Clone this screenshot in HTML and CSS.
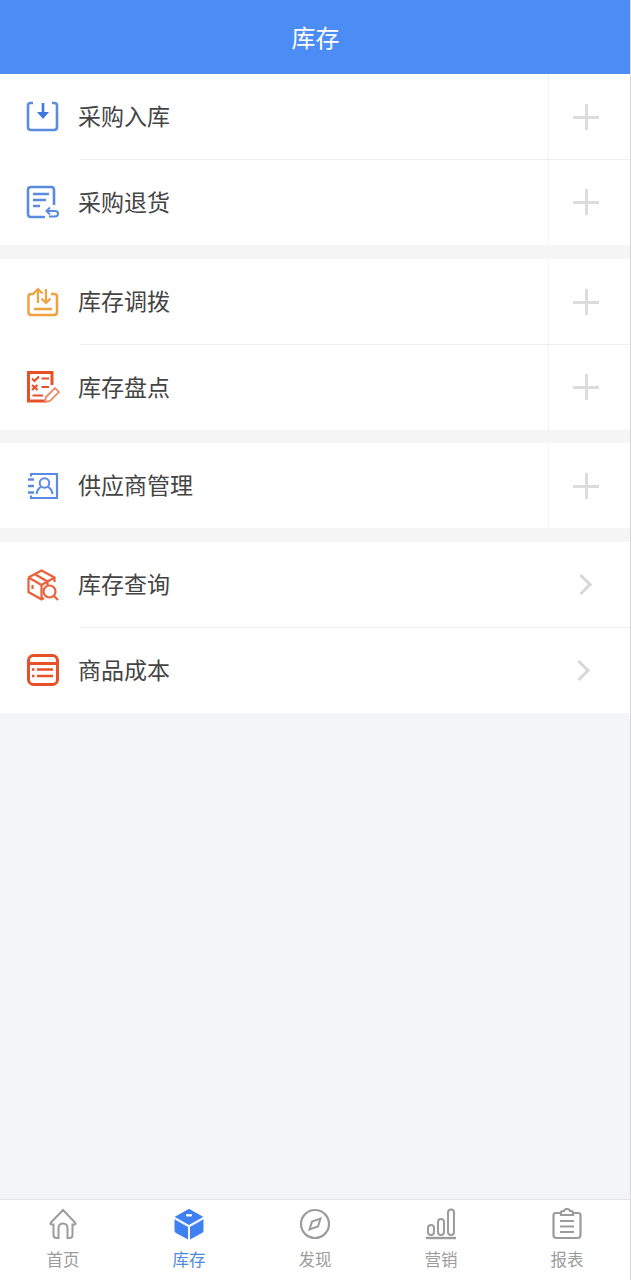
FILE: index.html
```html
<!DOCTYPE html>
<html lang="zh-CN">
<head>
    <meta charset="UTF-8">
    <meta name="viewport" content="width=device-width, initial-scale=1.0">
    <title>库存</title>
    <link rel="stylesheet" href="styles.css">
</head>
<body>
    <div class="page">
        <div class="header">库存</div>
        <div class="content">
            <div class="group">
                <div class="row">
                    <svg class="icon" viewBox="0 0 34 34" fill="none" stroke="#5b8be0" stroke-width="2.600"><path d="M7 3H4.500Q2 3 2 5.500V27Q2 30 5 30H28Q31 30 31 27V5.500Q31 3 28.500 3H26"/><path d="M17 3V15" stroke="#3f78e0"/><path d="M11 12H23L17 19Z" fill="#3f78e0" stroke="none"/></svg>
                    <span class="label">采购入库</span>
                    <div class="action"><span class="plus"></span></div>
                </div>
                <div class="row">
                    <svg class="icon" viewBox="0 0 34 34" fill="none" stroke="#5b8be0" stroke-width="2.600"><path d="M19 32H5Q2 32 2 29V5Q2 2 5 2H25Q28 2 28 5V20"/><path d="M7 9H23M7 15H20M7 21H14"/><path d="M24 22.500L20.500 26L24 29.500M21 26H29Q32 26 32 28.500Q32 31.500 29 31.500H23" stroke-width="2"/></svg>
                    <span class="label">采购退货</span>
                    <div class="action"><span class="plus"></span></div>
                </div>
            </div>
            <div class="group">
                <div class="row">
                    <svg class="icon" viewBox="0 0 34 34" fill="none" stroke="#f0a23e" stroke-width="2.500"><path d="M8 9H5Q2.500 9 2.500 11.500V27Q2.500 30 5.500 30H28Q31 30 31 27V11.500Q31 9 28.500 9H25"/><path d="M8 24H26"/><path d="M12 18V4M7.500 8.500L12 4L16.500 8.500M20 4V18M15.500 13.500L20 18L24.500 13.500" stroke-width="2.200"/></svg>
                    <span class="label">库存调拨</span>
                    <div class="action"><span class="plus"></span></div>
                </div>
                <div class="row">
                    <svg class="icon" viewBox="0 0 34 34" fill="none" stroke="#e8502a" stroke-width="3"><path d="M20 31H2.500V2.500H26V15"/><path d="M6 8.500L8.500 11L13 6.500M6 15L11.500 20M11.500 15L6 20M15.500 8.500H23M15.500 17H23M6.500 25.500H17" stroke-width="2.200"/><path d="M19 32L20 27L29 18L33 22L24 31Z" stroke="#ee8a6c" stroke-width="1.800"/></svg>
                    <span class="label">库存盘点</span>
                    <div class="action"><span class="plus"></span></div>
                </div>
            </div>
            <div class="group">
                <div class="row">
                    <svg class="icon" viewBox="0 0 34 34" fill="none" stroke="#5b8be0" stroke-width="2.200"><path d="M5 7.500V5H31V29H5V26.500"/><path d="M2 10.500H8M2 17H8M2 23.500H8" stroke-width="2.400"/><circle cx="18.500" cy="14" r="4.800" stroke-width="2"/><path d="M10.500 25Q11.500 19.500 15 18M26.500 25Q25.500 19.500 22 18" stroke-width="2"/></svg>
                    <span class="label">供应商管理</span>
                    <div class="action"><span class="plus"></span></div>
                </div>
            </div>
            <div class="group">
                <div class="row">
                    <svg class="icon" viewBox="0 0 34 34" fill="none" stroke="#e8613a" stroke-width="2.200"><path d="M2.500 9.500L15.500 2.500L28.500 9.500V14M2.500 9.500V24L15.500 31.500L18 30M2.500 9.500L15.500 17V31.500M15.500 17L28.500 9.500M8.500 6L21.500 13.500V17M6.500 17V21"/><circle cx="23.500" cy="23.500" r="6"/><path d="M28 28L32 32"/></svg>
                    <span class="label">库存查询</span>
                    <span class="chevron"></span>
                </div>
                <div class="row">
                    <svg class="icon" viewBox="0 0 34 34" fill="none" stroke="#e8502a" stroke-width="3"><rect x="2.500" y="2.500" width="29" height="29" rx="5"/><path d="M2.500 10.500H31.500"/><path d="M11 16.500H27M11 23H27" stroke-width="2.600"/><path d="M6 16.500H8.500M6 23H8.500" stroke-width="2.600"/></svg>
                    <span class="label">商品成本</span>
                    <span class="chevron chevron-low"></span>
                </div>
            </div>
        </div>
        <div class="tabbar">
            <div class="tab">
                <svg class="tab-icon" viewBox="0 0 32 32" fill="none" stroke="#9c9c9c" stroke-width="2"><path d="M3.500 15L16 2L28.500 15Q29 16.500 27 16.500H25.500V27Q25.500 30 22.500 30H20.500V20.500Q20.500 15.500 16 15.500Q11.500 15.500 11.500 20.500V30H9.500Q6.500 30 6.500 27V16.500H5Q3 16.500 3.500 15Z"/></svg>
                <span>首页</span>
            </div>
            <div class="tab tab-active">
                <svg class="tab-icon" viewBox="0 0 32 32"><path d="M16 1L29 8.500L16 16L3 8.500Z" fill="#3f80f2"/><path d="M1.500 11.500L15 19V31.500L3 25Q1.500 24 1.500 22.500ZM30.500 11.500L17 19V31.500L29 25Q30.500 24 30.500 22.500Z" fill="#3f80f2"/><path d="M1.500 11V9L16 1L30.500 9V11L16 19Z" fill="#3f80f2"/><path d="M1 9.500L16 18L31 9.500" fill="none" stroke="#fff" stroke-width="1.800"/><rect x="13" y="6" width="6" height="2.500" rx="1.250" fill="#fff"/></svg>
                <span>库存</span>
            </div>
            <div class="tab">
                <svg class="tab-icon" viewBox="0 0 32 32" fill="none" stroke="#9c9c9c" stroke-width="2.200"><circle cx="16" cy="16" r="14"/><path d="M21.500 10.500L19 18.500L10.500 21.500L13 13.500Z" stroke-width="2"/></svg>
                <span>发现</span>
            </div>
            <div class="tab">
                <svg class="tab-icon" viewBox="0 0 32 32" fill="none" stroke="#9c9c9c" stroke-width="2"><path d="M1 30H31" stroke-width="2.400"/><rect x="3" y="17" width="6" height="10" rx="3"/><rect x="13" y="11" width="6" height="16" rx="3"/><rect x="23" y="1.500" width="6" height="25.500" rx="3"/></svg>
                <span>营销</span>
            </div>
            <div class="tab">
                <svg class="tab-icon" viewBox="0 0 32 32" fill="none" stroke="#9c9c9c" stroke-width="2.200"><path d="M9 5H5Q2.500 5 2.500 7.500V27Q2.500 30 5.500 30H26.500Q29.500 30 29.500 27V7.500Q29.500 5 27 5H23"/><path d="M10 7V4.500Q10 3 12 3H13Q13.500 1 16 1Q18.500 1 19 3H20Q22 3 22 4.500V7Z"/><path d="M9 13H23M9 18.500H23M9 24H23"/></svg>
                <span>报表</span>
            </div>
        </div>
    </div>
</body>
</html>
```

FILE: styles.css
```css
* {
    box-sizing: border-box;
}
body {
    margin: 0;
    background: #f3f5f9;
    font-family: "Noto Sans CJK SC", "Noto Sans", sans-serif;
}
.page {
    display: flex;
    flex-direction: column;
    height: 1280px;
    border-right: 1px solid #d8d8d8;
    overflow: hidden;
}
.header {
    flex: none;
    height: 74px;
    margin-right: -1px;
    background: #4b8cf5;
    color: #fff;
    font-size: 24px;
    line-height: 74px;
    text-align: center;
}
.content {
    flex: 1;
}
.group {
    margin-bottom: 14px;
    background: #fff;
    box-shadow: 0 14px 0 #f5f5f5;
}
.group:nth-child(2) {
    margin-bottom: 13px;
}
.group:nth-child(3) .row {
    height: 85px;
}
.group:last-child {
    box-shadow: none;
}
.row {
    display: flex;
    position: relative;
    align-items: center;
    height: 85.500px;
    padding-left: 26px;
}
.row + .row::before {
    content: "";
    position: absolute;
    top: -1px;
    left: 80px;
    right: 0;
    height: 1px;
    background: #eeeeee;
}
.icon {
    flex: none;
    width: 34px;
    height: 34px;
}
.label {
    flex: 1;
    margin-left: 18px;
    padding-bottom: 3px;
    color: #444;
    font-size: 23px;
    line-height: 32px;
}
.action {
    display: flex;
    align-items: center;
    justify-content: center;
    align-self: stretch;
    width: 82px;
    padding-right: 7px;
    border-left: 1px solid #f4f4f4;
}
.plus {
    display: block;
    position: relative;
    width: 26px;
    height: 26px;
}
.plus::before,
.plus::after {
    content: "";
    position: absolute;
    background: #dcdcdc;
}
.plus::before {
    top: 12px;
    left: 0;
    width: 26px;
    height: 3px;
}
.plus::after {
    top: 0;
    left: 12px;
    width: 3px;
    height: 26px;
}
.chevron {
    width: 15px;
    height: 15px;
    margin-right: 41px;
    border-top: 3px solid #d8d8d8;
    border-right: 3px solid #d8d8d8;
    transform: rotate(45deg);
}
.chevron-low {
    margin-right: 43px;
}
.tabbar {
    display: flex;
    flex: none;
    height: 81px;
    padding-top: 8px;
    background: #fff;
    border-top: 1px solid #e4e4e4;
}
.tab {
    display: flex;
    flex: 1;
    flex-direction: column;
    align-items: center;
    color: #9c9c9c;
    font-size: 16.500px;
}
.tab span {
    margin-top: 7px;
    line-height: 24px;
}
.tab-active {
    color: #4b8ad8;
}
.tab-icon {
    width: 32px;
    height: 32px;
}
```
